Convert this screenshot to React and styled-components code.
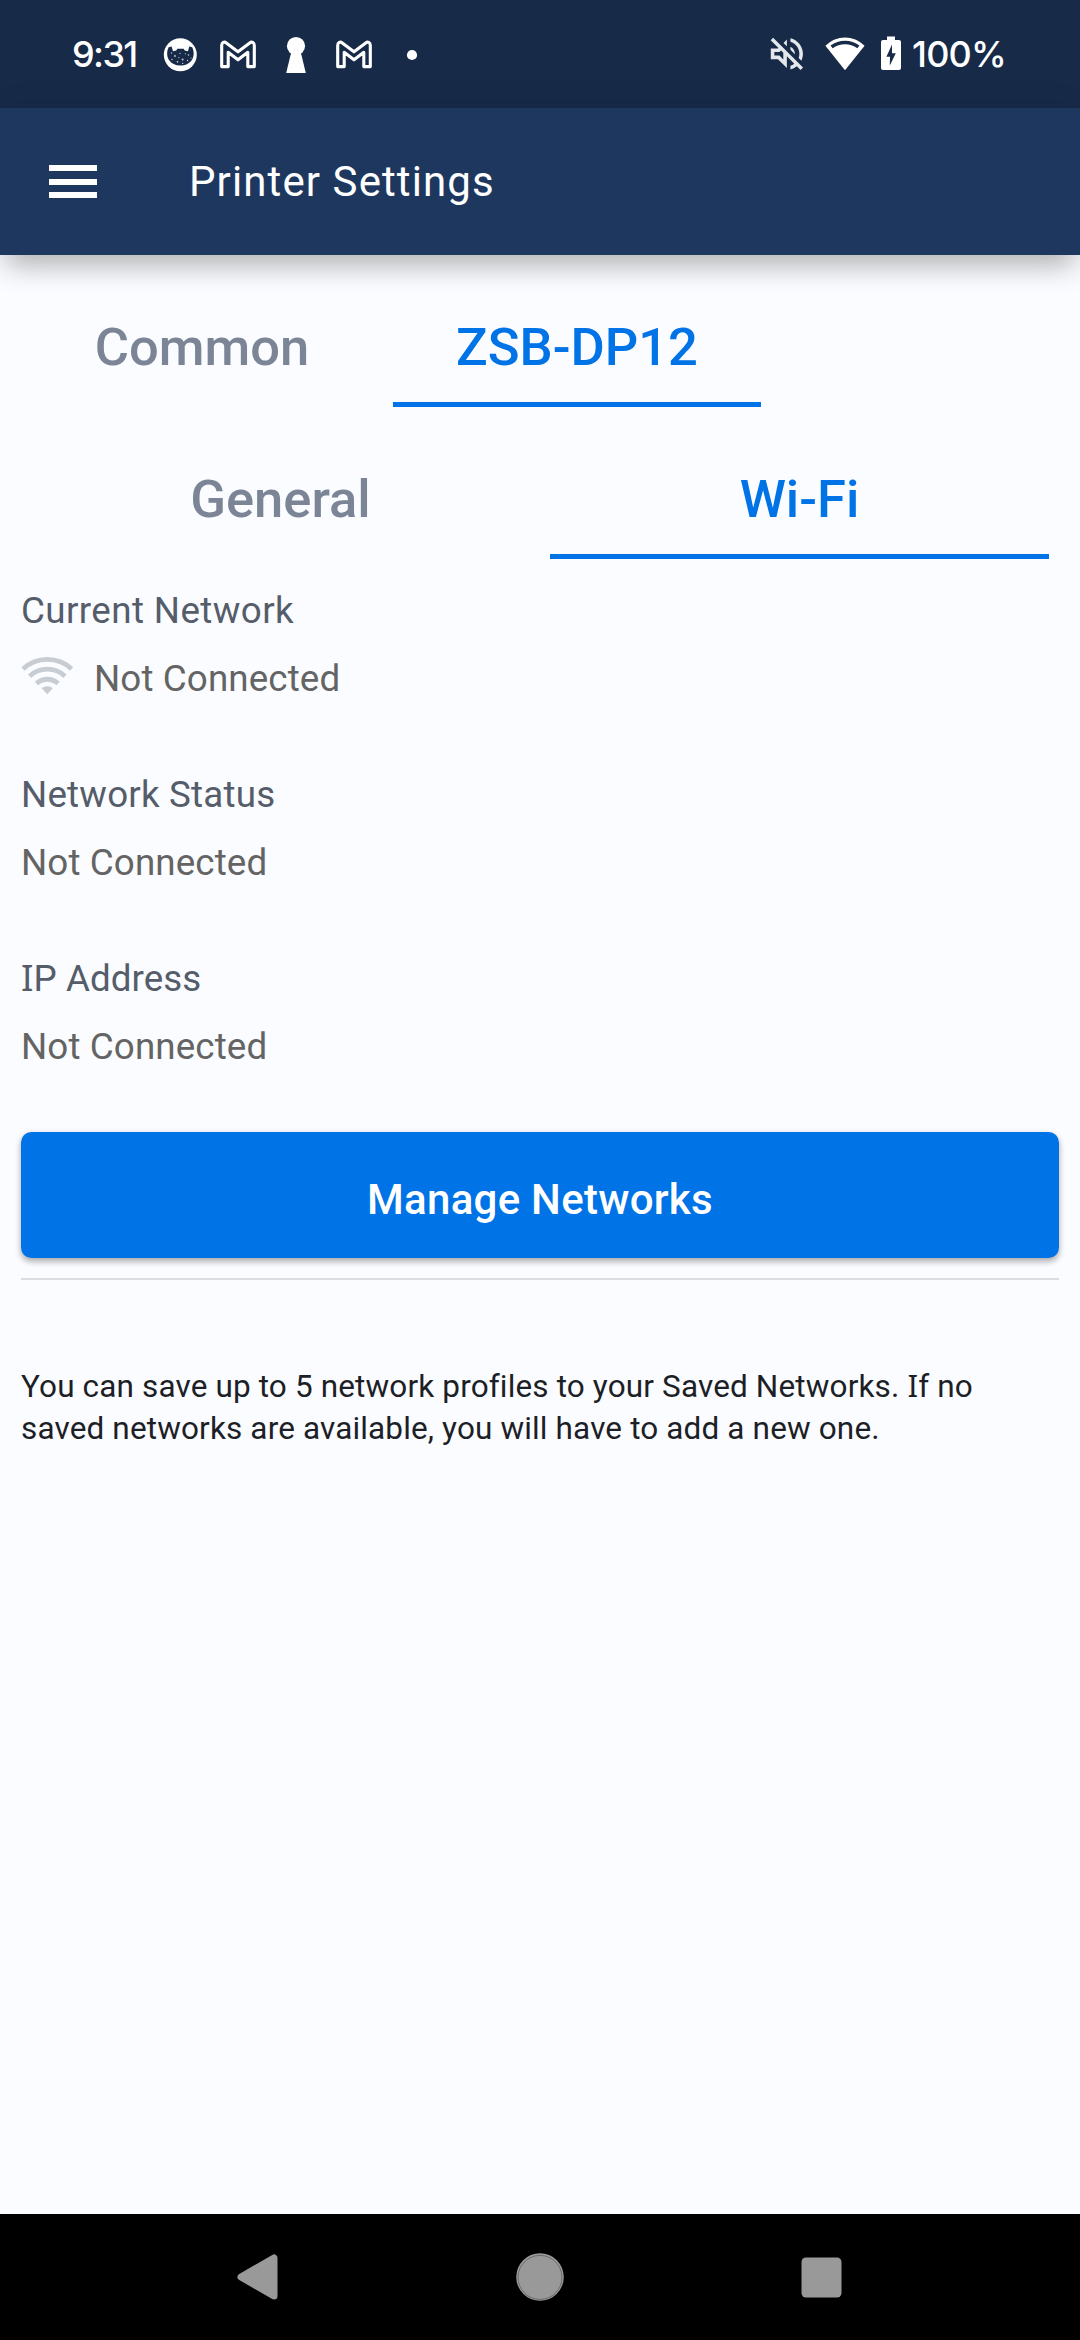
import React from 'react';
import styled, { createGlobalStyle } from 'styled-components';

const GlobalStyle = createGlobalStyle`
  * { box-sizing: border-box; }
  body {
    margin: 0;
    background: #fbfcff;
    font-family: Roboto, 'Liberation Sans', sans-serif;
  }
`;

const Screen = styled.div`
  width: 1080px;
  height: 2340px;
  display: flex;
  flex-direction: column;
  background: #fbfcff;
  overflow: hidden;
`;

const StatusBar = styled.header`
  height: 108px;
  flex: none;
  display: flex;
  align-items: center;
  background: #172a48;
  color: #fff;
  padding: 0 70px 0 72px;
`;

const StatusText = styled.span`
  width: ${(p) => p.$width}px;
  font: 500 36px/40px Inter, 'Liberation Sans', sans-serif;
  letter-spacing: ${(p) => p.$tracking}px;
  white-space: nowrap;
`;

const Notifications = styled.div`
  display: flex;
  flex: 1;
`;

const NotificationSlot = styled.div`
  width: 58px;
  display: flex;
  justify-content: center;
`;

const SystemIcons = styled.div`
  display: flex;
  align-items: center;
  margin-right: 11px;

  svg { display: block; }
  svg + svg { margin-left: 16px; }
`;

const AppBar = styled.nav`
  position: relative;
  z-index: 1;
  height: 147px;
  flex: none;
  display: flex;
  align-items: center;
  background: #1e375e;
  padding: 0 49px;
  box-shadow: 0 16px 26px -6px rgba(0, 0, 0, 0.27), 0 4px 40px rgba(0, 0, 0, 0.06);
`;

const MenuButton = styled.button`
  width: 48px;
  height: 33px;
  display: flex;
  flex-direction: column;
  justify-content: space-between;
  margin: 0 92px 0 0;
  padding: 0;
  border: 0;
  background: none;
`;

const MenuLine = styled.span`
  height: 6px;
  background: #fff;
`;

const Title = styled.h1`
  margin: 0;
  color: #fff;
  font-size: 42px;
  line-height: 50px;
  font-weight: 400;
  letter-spacing: 1.1px;
`;

const Content = styled.main`
  flex: 1;
  display: flex;
  flex-direction: column;
  padding-top: 32px;
`;

const Tabs = styled.div`
  display: flex;
  gap: ${(p) => p.$gap}px;
  padding-left: ${(p) => p.$inset}px;
  margin-bottom: ${(p) => p.$after}px;
`;

const Tab = styled.button`
  width: ${(p) => p.$width}px;
  height: 120px;
  padding: 0;
  border: 0;
  background: none;
  box-shadow: ${(p) => (p.$active ? 'inset 0 -5px #0073e6' : 'none')};
  color: ${(p) => (p.$active ? '#0073e6' : '#7c8596')};
  font: 500 52.5px/62px Roboto, 'Liberation Sans', sans-serif;
`;

const Details = styled.section`
  display: flex;
  flex-direction: column;
  gap: 68px;
  padding: 0 21px;
`;

const Field = styled.div`
  display: flex;
  flex-direction: column;
  gap: 20px;
  font-size: 36.75px;
  line-height: 48px;
`;

const Label = styled.div`
  color: #555c6a;
  letter-spacing: ${(p) => p.$tracking}px;
`;

const Value = styled.div`
  display: flex;
  align-items: flex-start;
  gap: 20px;
  color: #646464;
  letter-spacing: 0.12px;

  svg { margin-top: 2px; }
`;

const SerifI = styled.span`
  font-family: 'Noto Sans', sans-serif;
  line-height: 1;
`;

const ManageButton = styled.button`
  height: 126px;
  margin: 61px 21px 20px;
  padding: 9px 0 0;
  border: 0;
  border-radius: 10.5px;
  background: #0073e6;
  color: #fff;
  font: 500 42px/50px Roboto, 'Liberation Sans', sans-serif;
  letter-spacing: 0.27px;
  box-shadow: 0 4px 6px rgba(0, 0, 0, 0.26), 0 1px 6px rgba(0, 0, 0, 0.1);
`;

const Divider = styled.hr`
  width: 1038px;
  height: 2px;
  margin: 0 21px 86px;
  border: 0;
  background: #dcdde0;
`;

const Hint = styled.p`
  max-width: 1020px;
  margin: 0;
  padding-left: 21px;
  color: #1d1f27;
  font-size: 31.5px;
  line-height: 42px;
  letter-spacing: 0.14px;
`;

const NavBar = styled.footer`
  height: 126px;
  flex: none;
  display: flex;
  align-items: center;
  justify-content: space-between;
  padding: 0 238px 0 237px;
  background: #000;
`;

const CatIcon = () => (
  <svg width="40" height="40" viewBox="0 0 40 40">
    <circle cx="20.3" cy="20.8" r="16.5" fill="#fff" />
    <path d="M8.6 13.2 11.6 12.4 13 17.2 16.2 16.4 17.4 14.8H23.6L24.8 16.4 28 17.2 29.2 12.4 32.2 13.2C34.4 17.8 34 22.4 32 25.8 29.4 29.8 25.2 31.6 20.4 31.6 15.4 31.6 11.2 29.6 8.6 25.6 6.6 22 6.6 17.2 8.6 13.2Z" fill="#172a48" />
    <g fill="#fff" fillOpacity="0.75">
      <circle cx="11.5" cy="19" r=".7" /><circle cx="15" cy="22" r=".9" />
      <circle cx="20" cy="19.4" r=".6" /><circle cx="22.6" cy="25.6" r="1" />
      <circle cx="28.5" cy="21" r=".8" /><circle cx="25.4" cy="19.8" r=".6" />
      <circle cx="12" cy="25.5" r=".7" /><circle cx="17.5" cy="27.8" r=".9" />
      <circle cx="27.6" cy="26.5" r=".7" /><circle cx="18.8" cy="23.6" r=".6" />
      <circle cx="31" cy="24" r=".6" /><circle cx="22.6" cy="29.4" r=".7" />
    </g>
  </svg>
);

const MailIcon = () => (
  <svg width="40" height="40" viewBox="0 0 40 40" fill="none" stroke="#fff" strokeWidth="3.1" strokeLinejoin="round">
    <path d="M3.7 32.6V11.4C3.7 8.4 6.2 7.4 8.3 8.9L20 17.8 31.7 8.9C33.8 7.4 36.3 8.4 36.3 11.4V32.6H29.8V18.3L20 25.8 10.2 18.3V32.6Z" />
  </svg>
);

const KeyholeIcon = () => (
  <svg width="40" height="40" viewBox="0 0 40 40" fill="#fff">
    <circle cx="20" cy="12" r="9.1" />
    <path d="M15.4 17.5H24.6L29.8 39H10.2Z" />
  </svg>
);

const DotIcon = () => (
  <svg width="40" height="40" viewBox="0 0 40 40"><circle cx="20" cy="21" r="5.1" fill="#fff" /></svg>
);

const MutedIcon = () => (
  <svg width="40" height="40" viewBox="2 .9 22.4 22.4" fill="#e4e7eb">
    <path d="M4.34 2.93 2.93 4.34 7.29 8.7 7 9H3v6h4l5 5v-6.59l4.18 4.18c-.65.49-1.38.88-2.18 1.11v2.06a8.94 8.94 0 0 0 3.61-1.75l2.05 2.05 1.41-1.41L4.34 2.93zM10 15.17 7.83 13H5v-2h2.83l.88-.88L10 11.41v3.76zM19 12c0 .82-.15 1.61-.41 2.34l1.53 1.53c.56-1.17.88-2.48.88-3.87 0-4.28-2.99-7.86-7-8.77v2.06c2.89.86 5 3.54 5 6.71zm-7-8-1.88 1.88L12 7.76V4zm4.5 8A4.5 4.5 0 0 0 14 7.97v1.79l2.48 2.48c.01-.08.02-.16.02-.24z" />
  </svg>
);

const WifiIcon = () => (
  <svg width="40" height="40" viewBox="0 0 40 40">
    <path d="M20 36.2.4 11.8C11.6.6 28.4.6 39.6 11.8Z" fill="#fff" />
    <path d="M6.6 12.9C14.6 7 25.4 7 33.4 12.9" fill="none" stroke="#172a48" strokeWidth="3.6" />
  </svg>
);

const BatteryIcon = () => (
  <svg width="20" height="40" viewBox="0 0 20 40">
    <path d="M6 2.4H14V6H18A2 2 0 0 1 20 8V34A2 2 0 0 1 18 36H2A2 2 0 0 1 0 34V8A2 2 0 0 1 2 6H6Z" fill="#fff" />
    <path d="M11 10.5 5.4 22.8H9L8.8 31.5 14.8 19.2H11Z" fill="#172a48" />
  </svg>
);

const NetworkIcon = () => (
  <svg width="53" height="38" viewBox="0 0 53 38" fill="none" stroke="#c8cdd4" strokeWidth="4.8">
    <path d="M2 12A35.7 35.7 0 0 1 50.6 12" />
    <path d="M8.6 19.2A25.9 25.9 0 0 1 44 19.2" />
    <path d="M15.5 26.5A15.9 15.9 0 0 1 37.1 26.5" />
    <path d="M26.3 37.2 20.7 31.3A8.3 8.3 0 0 1 31.9 31.3Z" fill="#c8cdd4" stroke="none" />
  </svg>
);

const BackIcon = () => (
  <svg width="42" height="48" viewBox="0 0 42 48">
    <path d="M4 24 37 5V43Z" fill="#999" stroke="#999" strokeWidth="7" strokeLinejoin="round" />
  </svg>
);

const HomeIcon = () => (
  <svg width="48" height="48" viewBox="0 0 48 48">
    <circle cx="24" cy="24" r="23.8" fill="#999" />
    <circle cx="24" cy="24.4" r="22" fill="none" stroke="#6c6c6c" strokeWidth="1" />
  </svg>
);

const RecentsIcon = () => (
  <svg width="41" height="48" viewBox="0 0 41 48">
    <rect x=".5" y="4.5" width="40" height="40" rx="4.5" fill="#999" />
  </svg>
);

export default function App() {
  return (
    <Screen>
      <GlobalStyle />
      <StatusBar>
        <StatusText $width={79} $tracking={-1.6}>9:31</StatusText>
        <Notifications>
          <NotificationSlot><CatIcon /></NotificationSlot>
          <NotificationSlot><MailIcon /></NotificationSlot>
          <NotificationSlot><KeyholeIcon /></NotificationSlot>
          <NotificationSlot><MailIcon /></NotificationSlot>
          <NotificationSlot><DotIcon /></NotificationSlot>
        </Notifications>
        <SystemIcons>
          <MutedIcon />
          <WifiIcon />
          <BatteryIcon />
        </SystemIcons>
        <StatusText $width={98} $tracking={-0.8}>100%</StatusText>
      </StatusBar>

      <AppBar>
        <MenuButton aria-label="Menu">
          <MenuLine />
          <MenuLine />
          <MenuLine />
        </MenuButton>
        <Title>Printer Settings</Title>
      </AppBar>

      <Content>
        <Tabs $gap={7} $inset={18} $after={32}>
          <Tab $width={368}>Common</Tab>
          <Tab $width={368} $active>ZSB-DP12</Tab>
        </Tabs>
        <Tabs $gap={20} $inset={31} $after={28}>
          <Tab $width={499}>General</Tab>
          <Tab $width={499} $active>Wi-Fi</Tab>
        </Tabs>

        <Details>
          <Field>
            <Label $tracking={0.4}>Current Network</Label>
            <Value><NetworkIcon />Not Connected</Value>
          </Field>
          <Field>
            <Label $tracking={0.2}>Network Status</Label>
            <Value>Not Connected</Value>
          </Field>
          <Field>
            <Label $tracking={0.05}><SerifI>I</SerifI>P Address</Label>
            <Value>Not Connected</Value>
          </Field>
        </Details>

        <ManageButton>Manage Networks</ManageButton>
        <Divider />
        <Hint>
          You can save up to 5 network profiles to your Saved Networks. <SerifI>I</SerifI>f no
          saved networks are available, you will have to add a new one.
        </Hint>
      </Content>

      <NavBar>
        <BackIcon />
        <HomeIcon />
        <RecentsIcon />
      </NavBar>
    </Screen>
  );
}
